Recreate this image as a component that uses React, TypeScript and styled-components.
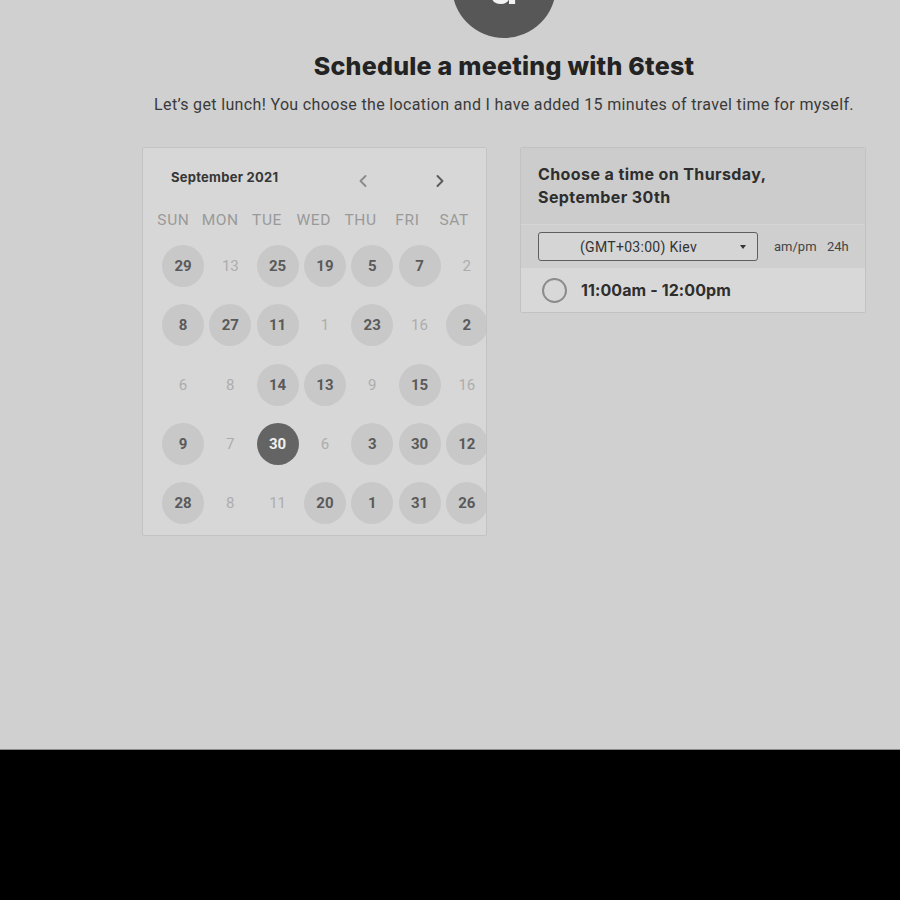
import React from "react";
import styled, { createGlobalStyle } from "styled-components";

const Global = createGlobalStyle`
  html, body { margin: 0; padding: 0; background: #000; }
  body { font-family: Roboto, "Liberation Sans", sans-serif; }
`;

const Page = styled.div`
  width: 900px;
  height: 750px;
  background: #d0d0d0;
  border-bottom: 1px solid #8a8a8a;
  overflow: hidden;
  box-sizing: border-box;
`;

const Column = styled.div`
  width: 724px;
  margin-left: 142px;
  display: flex;
  flex-direction: column;
  align-items: center;
`;

const Avatar = styled.div`
  width: 104px;
  height: 104px;
  margin-top: -66px;
  border-radius: 50%;
  background: #575757;
  color: #f2f2f2;
  display: flex;
  align-items: center;
  justify-content: center;
  font-family: Inter, sans-serif;
  font-weight: 600;
  font-size: 50px;
  line-height: 1;
  padding-top: 0;
  box-sizing: border-box;
`;

const Title = styled.h1`
  margin: 13px 0 0;
  font-family: Inter, sans-serif;
  font-weight: 800;
  font-size: 25px;
  line-height: 30px;
  color: #232323;
  letter-spacing: 0.25px;
`;

const Subtitle = styled.p`
  margin: 14px 0 0;
  font-family: Roboto, sans-serif;
  font-size: 16px;
  line-height: 20px;
  color: #3a3a3a;
  letter-spacing: 0.35px;
  white-space: nowrap;
`;

const Panels = styled.div`
  margin-top: 32px;
  width: 100%;
  display: flex;
  align-items: flex-start;
  gap: 33px;
`;

const CalendarCard = styled.div`
  width: 346px;
  height: 389px;
  box-sizing: border-box;
  border: 1px solid #c3c3c3;
  border-radius: 2px;
  background: #d7d7d7;
  overflow: hidden;
  padding-top: 14px;
`;

const MonthBar = styled.div`
  height: 30px;
  display: flex;
  align-items: center;
  padding-left: 28px;
`;

const MonthLabel = styled.div`
  flex: 0 0 182px;
  font-family: Inter, sans-serif;
  font-weight: 700;
  font-size: 13px;
  letter-spacing: 0.25px;
  color: #363636;
`;

const NavButton = styled.div<{ $dark?: boolean; $gap?: number }>`
  flex: 0 0 20px;
  height: 20px;
  display: flex;
  align-items: center;
  justify-content: center;
  margin-top: 8px;
  margin-right: ${(p) => p.$gap ?? 0}px;
  color: ${(p) => (p.$dark ? "#5a5a5a" : "#8a8a8a")};
`;

const WeekHeader = styled.div`
  margin-top: 16px;
  margin-left: 7px;
  display: grid;
  grid-template-columns: repeat(7, 46.8px);
  height: 24px;
  align-items: center;
`;

const WeekDay = styled.div`
  text-align: center;
  font-family: Roboto, sans-serif;
  font-size: 15.5px;
  color: #9a9a9a;
  letter-spacing: 0.6px;
`;

const DayGrid = styled.div`
  margin-top: 4.5px;
  margin-left: 16.4px;
  display: grid;
  grid-template-columns: repeat(7, 47.3px);
  grid-auto-rows: 59.25px;
`;

const DayCell = styled.div`
  display: flex;
  align-items: center;
  justify-content: center;
`;

type Kind = "on" | "off" | "sel";

const Day = styled.div<{ $kind: Kind }>`
  width: 42px;
  height: 42px;
  border-radius: 50%;
  display: flex;
  align-items: center;
  justify-content: center;
  font-family: Roboto, sans-serif;
  font-size: 15px;
  font-weight: ${(p) => (p.$kind === "off" ? 400 : 700)};
  background: ${(p) =>
    p.$kind === "on" ? "#c8c8c8" : p.$kind === "sel" ? "#646464" : "transparent"};
  color: ${(p) =>
    p.$kind === "on" ? "#5a5a5a" : p.$kind === "sel" ? "#f0f0f0" : "#adadad"};
`;

const TimeCard = styled.div`
  width: 347px;
  box-sizing: border-box;
  border: 1px solid #c2c2c2;
  border-radius: 2px;
  overflow: hidden;
  background: #d8d8d8;
`;

const TimeHeader = styled.div`
  background: #cccccc;
  padding: 15px 17px;
  font-family: Inter, sans-serif;
  font-weight: 700;
  font-size: 16px;
  line-height: 23px;
  letter-spacing: 0.4px;
  color: #2e2e2e;
  height: 76px;
  box-sizing: border-box;
`;

const ZoneRow = styled.div`
  background: #cfcfcf;
  border-top: 1px solid #d5d5d5;
  height: 44px;
  box-sizing: border-box;
  display: flex;
  align-items: center;
  padding-left: 17px;
  gap: 16px;
`;

const ZoneSelect = styled.div`
  width: 220px;
  height: 29px;
  box-sizing: border-box;
  border: 1px solid #5e5e5e;
  border-radius: 3px;
  background: #d5d5d5;
  display: flex;
  align-items: center;
  position: relative;
  font-family: Roboto, sans-serif;
  font-size: 14px;
  letter-spacing: 0.3px;
  color: #333;
  padding-left: 41px;
`;

const Caret = styled.span`
  position: absolute;
  right: 11px;
  top: 12px;
  width: 0;
  height: 0;
  border-left: 3.5px solid transparent;
  border-right: 3.5px solid transparent;
  border-top: 4px solid #333;
`;

const Units = styled.div`
  font-family: Roboto, sans-serif;
  font-size: 13px;
  color: #444;
  word-spacing: 2px;
  white-space: pre;
`;

const SlotRow = styled.div`
  height: 44px;
  display: flex;
  align-items: center;
  padding-left: 21px;
  gap: 14px;
`;

const Radio = styled.div`
  width: 25px;
  height: 25px;
  box-sizing: border-box;
  border: 2px solid #8c8c8c;
  border-radius: 50%;
`;

const SlotText = styled.div`
  font-family: Inter, sans-serif;
  font-weight: 700;
  font-size: 16px;
  letter-spacing: 0.1px;
  color: #2e2e2e;
`;

const Chevron = ({ dir }: { dir: "l" | "r" }) => (
  <svg width="12" height="14" viewBox="0 0 12 14" fill="none">
    <path
      d={dir === "l" ? "M8.5 2 L3.5 7 L8.5 12" : "M3.5 2 L8.5 7 L3.5 12"}
      stroke="currentColor"
      strokeWidth="1.9"
      strokeLinecap="round"
      strokeLinejoin="round"
    />
  </svg>
);

const weekDays = ["SUN", "MON", "TUE", "WED", "THU", "FRI", "SAT"];

const days: [string, Kind][][] = [
  [["29", "on"], ["13", "off"], ["25", "on"], ["19", "on"], ["5", "on"], ["7", "on"], ["2", "off"]],
  [["8", "on"], ["27", "on"], ["11", "on"], ["1", "off"], ["23", "on"], ["16", "off"], ["2", "on"]],
  [["6", "off"], ["8", "off"], ["14", "on"], ["13", "on"], ["9", "off"], ["15", "on"], ["16", "off"]],
  [["9", "on"], ["7", "off"], ["30", "sel"], ["6", "off"], ["3", "on"], ["30", "on"], ["12", "on"]],
  [["28", "on"], ["8", "off"], ["11", "off"], ["20", "on"], ["1", "on"], ["31", "on"], ["26", "on"]],
];

export default function App() {
  return (
    <>
      <Global />
      <Page>
        <Column>
          <Avatar>a</Avatar>
          <Title>Schedule a meeting with 6test</Title>
          <Subtitle>
            Let’s get lunch! You choose the location and I have added 15 minutes of travel time for myself.
          </Subtitle>
          <Panels>
            <CalendarCard>
              <MonthBar>
                <MonthLabel>September 2021</MonthLabel>
                <NavButton $gap={57}>
                  <Chevron dir="l" />
                </NavButton>
                <NavButton $dark>
                  <Chevron dir="r" />
                </NavButton>
              </MonthBar>
              <WeekHeader>
                {weekDays.map((d) => (
                  <WeekDay key={d}>{d}</WeekDay>
                ))}
              </WeekHeader>
              <DayGrid>
                {days.flat().map(([n, k], i) => (
                  <DayCell key={i}>
                    <Day $kind={k}>{n}</Day>
                  </DayCell>
                ))}
              </DayGrid>
            </CalendarCard>
            <TimeCard>
              <TimeHeader>
                Choose a time on Thursday,
                <br />
                September 30th
              </TimeHeader>
              <ZoneRow>
                <ZoneSelect>
                  (GMT+03:00) Kiev
                  <Caret />
                </ZoneSelect>
                <Units>am/pm  24h</Units>
              </ZoneRow>
              <SlotRow>
                <Radio />
                <SlotText>11:00am - 12:00pm</SlotText>
              </SlotRow>
            </TimeCard>
          </Panels>
        </Column>
      </Page>
    </>
  );
}
